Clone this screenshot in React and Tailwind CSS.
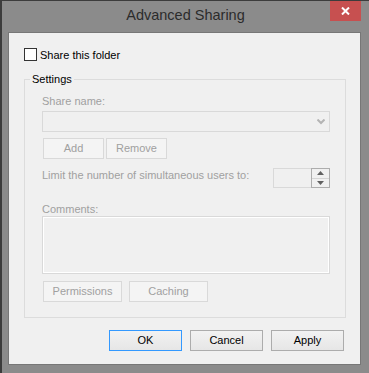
export default function App() {
  const disabledBtn =
    "h-[21px] border border-[#d9d9d9] bg-[#f4f4f4] text-[#a0a0a0] text-[11px] leading-[19px] flex items-center justify-center";
  const enabledBtn =
    "w-[73px] h-[21px] border bg-gradient-to-b from-[#f2f2f2] to-[#e6e6e6] text-[#000] text-[11px] leading-[19px] flex items-center justify-center";
  return (
    <div className="w-[369px] h-[373px] bg-[#8b8b8b] border-l-2 border-t border-[#3c3c3c] flex flex-col font-['Liberation_Sans',Arial,sans-serif]">
      {/* Title bar */}
      <div className="h-[31px] grid grid-cols-[1fr_auto_1fr] items-start">
        <div />
        <div className="pt-[5px] text-[14.5px] leading-[18px] text-[#2b2b2b]">Advanced Sharing</div>
        <div className="flex justify-end pr-[8px]">
          <div className="w-[31px] h-[20px] bg-[#c75050] flex items-center justify-center">
            <svg width="9" height="8" viewBox="0 0 9 8">
              <path d="M1 0.5 L8 7.5 M8 0.5 L1 7.5" stroke="#fff" strokeWidth="2" />
            </svg>
          </div>
        </div>
      </div>

      {/* Client area */}
      <div className="ml-[6px] w-[353px] h-[333px] bg-[#f0f0f0] border border-[#777777] flex flex-col">
        {/* Checkbox row */}
        <div className="mt-[15px] ml-[15px] flex items-center h-[13px]">
          <div className="w-[13px] h-[13px] border border-[#333333] bg-white" />
          <span className="ml-[3px] text-[11px] leading-[14px] text-black">Share this folder</span>
        </div>

        {/* Settings group */}
        <fieldset className="mt-[10px] ml-[15px] w-[322px] h-[247px] border border-[#dcdcdc] p-0 m-0">
          <legend className="ml-[5px] px-[2px] text-[11px] leading-[16px] text-black">Settings</legend>
          <div className="pl-[17px] pr-[15px] flex flex-col">
            <div className="mt-[7px] text-[11px] leading-[14px] text-[#a0a0a0]">Share name:</div>
            <div className="mt-[3px] w-[288px] h-[21px] border border-[#d9d9d9] bg-[#f0f0f0] flex items-center justify-end pr-[4px]">
              <svg width="8" height="6" viewBox="0 0 8 6">
                <path d="M0.5 0.5 L4 4 L7.5 0.5" stroke="#b4b4b4" strokeWidth="2" fill="none" />
              </svg>
            </div>
            <div className="mt-[6px] ml-[1px] flex gap-[2px]">
              <div className={disabledBtn + " w-[61px]"}>Add</div>
              <div className={disabledBtn + " w-[61px]"}>Remove</div>
            </div>
            <div className="mt-[9px] flex items-start justify-between">
              <div className="whitespace-nowrap text-[11px] leading-[14px] text-[#a0a0a0]">Limit the number of simultaneous users to:</div>
              <div className="flex h-[20px]">
                <div className="w-[38px] h-[20px] border border-r-0 border-[#d9d9d9] bg-[#f0f0f0]" />
                <div className="w-[19px] h-[20px] border border-[#adadad] bg-[#f0f0f0] flex flex-col">
                  <div className="flex-1 flex items-center justify-center border-b border-[#d4d4d4]">
                    <svg width="7" height="4" viewBox="0 0 7 4">
                      <path d="M0 4 L3.5 0 L7 4 Z" fill="#606060" />
                    </svg>
                  </div>
                  <div className="flex-1 flex items-center justify-center">
                    <svg width="7" height="4" viewBox="0 0 7 4">
                      <path d="M0 0 L3.5 4 L7 0 Z" fill="#606060" />
                    </svg>
                  </div>
                </div>
              </div>
            </div>
            <div className="mt-[14px] text-[11px] leading-[14px] text-[#a0a0a0]">Comments:</div>
            <div className="w-[288px] h-[58px] border border-[#d9d9d9] bg-[#f0f0f0] shadow-[inset_0_0_0_1px_#ffffff]" />
            <div className="mt-[7px] ml-[1px] flex gap-[7px]">
              <div className={disabledBtn + " w-[79px]"}>Permissions</div>
              <div className={disabledBtn + " w-[79px]"}>Caching</div>
            </div>
          </div>
        </fieldset>

        {/* Bottom buttons */}
        <div className="mt-[12px] pr-[16px] flex justify-end gap-[8px]">
          <div className={enabledBtn + " border-[#3399ff]"}>OK</div>
          <div className={enabledBtn + " border-[#acacac]"}>Cancel</div>
          <div className={enabledBtn + " border-[#acacac]"}>Apply</div>
        </div>
      </div>
    </div>
  );
}
